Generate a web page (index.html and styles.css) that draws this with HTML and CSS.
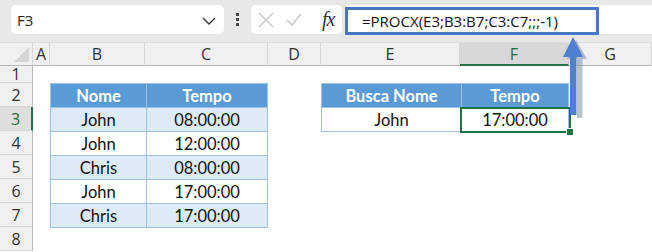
FILE: index.html
```html
<!DOCTYPE html>
<html>
<head>
<meta charset="utf-8">
<link rel="stylesheet" href="styles.css">
</head>
<body>
<div class="app">
  <div class="toolbar">
    <div class="namebox">
      <span class="name">F3</span>
      <svg class="chev" width="14" height="8" viewBox="0 0 14 8"><path d="M1 1 L7 7 L13 1" fill="none" stroke="#333" stroke-width="1.3"/></svg>
    </div>
    <div class="dots"><span></span><span></span><span></span></div>
    <div class="fxbox">
      <svg class="ico" width="16" height="16" viewBox="0 0 16 16"><path d="M1 1 L15 15 M15 1 L1 15" stroke="#c4c4c4" stroke-width="1.3" fill="none"/></svg>
      <svg class="ico check" width="16" height="16" viewBox="0 0 16 16"><path d="M1 8 L6 13 L15 2" stroke="#c4c4c4" stroke-width="1.3" fill="none"/></svg>
      <span class="fx">fx</span>
    </div>
    <div class="formula">
      <div class="ftext">=PROCX(E3;B3:B7;C3:C7;;;-1)</div>
    </div>
  </div>
  <div class="sheet">
    <div class="corner r1 c1"><div class="tri"></div></div>
    <div class="ch r1 c2">A</div>
    <div class="ch r1 c3">B</div>
    <div class="ch r1 c4">C</div>
    <div class="ch r1 c5">D</div>
    <div class="ch r1 c6">E</div>
    <div class="ch sel r1 c7">F</div>
    <div class="ch r1 c8">G</div>

    <div class="rh r2 c1">1</div>
    <div class="rh r3 c1">2</div>
    <div class="rh sel r4 c1">3</div>
    <div class="rh r5 c1">4</div>
    <div class="rh r6 c1">5</div>
    <div class="rh r7 c1">6</div>
    <div class="rh r8 c1">7</div>
    <div class="rh r9 c1">8</div>

    <table class="tbl t1">
      <tr class="hd"><td>Nome</td><td>Tempo</td></tr>
      <tr class="band"><td>John</td><td>08:00:00</td></tr>
      <tr><td>John</td><td>12:00:00</td></tr>
      <tr class="band"><td>Chris</td><td>08:00:00</td></tr>
      <tr><td>John</td><td>17:00:00</td></tr>
      <tr class="band"><td>Chris</td><td>17:00:00</td></tr>
    </table>

    <table class="tbl t2">
      <tr class="hd"><td>Busca Nome</td><td>Tempo</td></tr>
      <tr><td>John</td><td class="active">17:00:00<div class="selbox"></div><div class="handle"></div></td></tr>
    </table>
  </div>
  <svg class="arrow" width="40" height="90" viewBox="0 0 40 90">
    <path d="M14 2 L25 21 L20.5 21 L20.5 80 L15 80 L15 21 L5 21 Z" fill="#7f8fa8" opacity="0.55" transform="translate(2,1)"/>
    <path d="M13 0 L23 20 L16.5 20 L16.5 78 L10 78 L10 20 L3 20 Z" fill="#4f7fd0"/>
  </svg>
</div>
</body>
</html>
```
FILE: styles.css
```css
html, body {
  margin: 0;
  padding: 0;
  background: #ffffff;
}
.app {
  position: relative;
  width: 652px;
  height: 252px;
  overflow: hidden;
  font-family: "Open Sans", "DejaVu Sans", sans-serif;
}
.toolbar {
  height: 43px;
  box-sizing: border-box;
  background: #e8e8e8;
  display: flex;
  align-items: flex-start;
  padding: 5px 0 0 11px;
  border-bottom: 1px solid #dcdcdc;
}
.namebox {
  width: 213px;
  height: 29px;
  box-sizing: border-box;
  background: #fff;
  border-radius: 5px;
  display: flex;
  align-items: center;
  justify-content: space-between;
  padding: 0 8px 0 6px;
}
.name {
  font-size: 15px;
  color: #222;
}
.chev { margin-top: 2px; }
.dots {
  width: 27px;
  height: 29px;
  display: flex;
  flex-direction: column;
  align-items: center;
  justify-content: center;
  gap: 2px;
}
.dots span {
  width: 3px;
  height: 3px;
  background: #444;
}
.fxbox {
  width: 91px;
  height: 29px;
  box-sizing: border-box;
  background: #fff;
  border-radius: 5px;
  display: flex;
  align-items: center;
  padding-left: 7px;
}
.ico { flex: none; }
.check { margin-left: 12px; }
.fx {
  margin-left: 20px;
  font-family: "Liberation Serif", "DejaVu Serif", serif;
  font-style: italic;
  font-size: 20px;
  color: #333;
  letter-spacing: -1px;
}
.formula {
  flex: 1;
  height: 29px;
  margin-left: 3px;
  background: #fff;
  border-radius: 5px 0 0 5px;
  position: relative;
}
.ftext {
  position: absolute;
  left: 0;
  top: 2px;
  width: 254px;
  height: 28px;
  box-sizing: border-box;
  border: 3px solid #4a76c6;
  padding-left: 14px;
  font-size: 15px;
  line-height: 22px;
  color: #111;
  white-space: nowrap;
}
.sheet {
  display: grid;
  grid-template-columns: 33px 17px 95px 123px 53px 139px 109px 1fr;
  grid-template-rows: 23px 17px repeat(7, 24px) 1fr;
  height: 209px;
}
.r1 { grid-row: 1; } .r2 { grid-row: 2; } .r3 { grid-row: 3; }
.r4 { grid-row: 4; } .r5 { grid-row: 5; } .r6 { grid-row: 6; }
.r7 { grid-row: 7; } .r8 { grid-row: 8; } .r9 { grid-row: 9; }
.c1 { grid-column: 1; } .c2 { grid-column: 2; } .c3 { grid-column: 3; }
.c4 { grid-column: 4; } .c5 { grid-column: 5; } .c6 { grid-column: 6; }
.c7 { grid-column: 7; } .c8 { grid-column: 8; }
.corner {
  background: #f0f0f0;
  border-bottom: 1px solid #b8b8b8;
  border-right: 1px solid #d6d6d6;
  position: relative;
}
.tri {
  position: absolute;
  right: 3px;
  bottom: 3px;
  width: 0;
  height: 0;
  border-left: 15px solid transparent;
  border-bottom: 15px solid #d6d6d6;
}
.ch {
  background: #f0f0f0;
  border-bottom: 1px solid #b8b8b8;
  border-right: 1px solid #d6d6d6;
  font-size: 16px;
  color: #333;
  display: flex;
  align-items: center;
  justify-content: center;
  line-height: 1;
}
.ch.sel {
  background: #d8d8d8;
  border-bottom: 2px solid #217346;
  color: #1e6b40;
}
.rh {
  background: #f0f0f0;
  border-right: 1px solid #b8b8b8;
  border-bottom: 1px solid #d6d6d6;
  font-size: 16px;
  color: #333;
  display: flex;
  align-items: center;
  justify-content: center;
  line-height: 1;
}
.rh.sel {
  background: #dedede;
  border-right: 2px solid #217346;
  color: #1e6b40;
}
.tbl {
  border-collapse: collapse;
  font-family: Lato, "Open Sans", sans-serif;
  font-size: 16.5px;
  color: #111;
  align-self: start;
}
.t1 {
  grid-column: 3 / 5;
  grid-row: 3 / 9;
  width: 218px;
}
.t2 {
  grid-column: 6 / 8;
  grid-row: 3 / 5;
  width: 248px;
}
.t1 td:first-child { width: 95px; }
.t2 td:first-child { width: 139px; }
.tbl td {
  height: 23px;
  padding: 0;
  border: 1px solid #9bc2e6;
  text-align: center;
  line-height: 22px;
}
.tbl .hd td {
  background: #5b9bd5;
  color: #fff;
  font-weight: bold;
}
.tbl .band td {
  background: #ddebf7;
}
.active {
  position: relative;
}
.selbox {
  position: absolute;
  left: -2px;
  top: -1px;
  right: -3px;
  bottom: -2px;
  border: 2px solid #217346;
}
.handle {
  position: absolute;
  right: -6px;
  bottom: -5px;
  width: 6px;
  height: 6px;
  background: #217346;
  border: 1px solid #fff;
}
.arrow {
  position: absolute;
  left: 560px;
  top: 37px;
}
```
